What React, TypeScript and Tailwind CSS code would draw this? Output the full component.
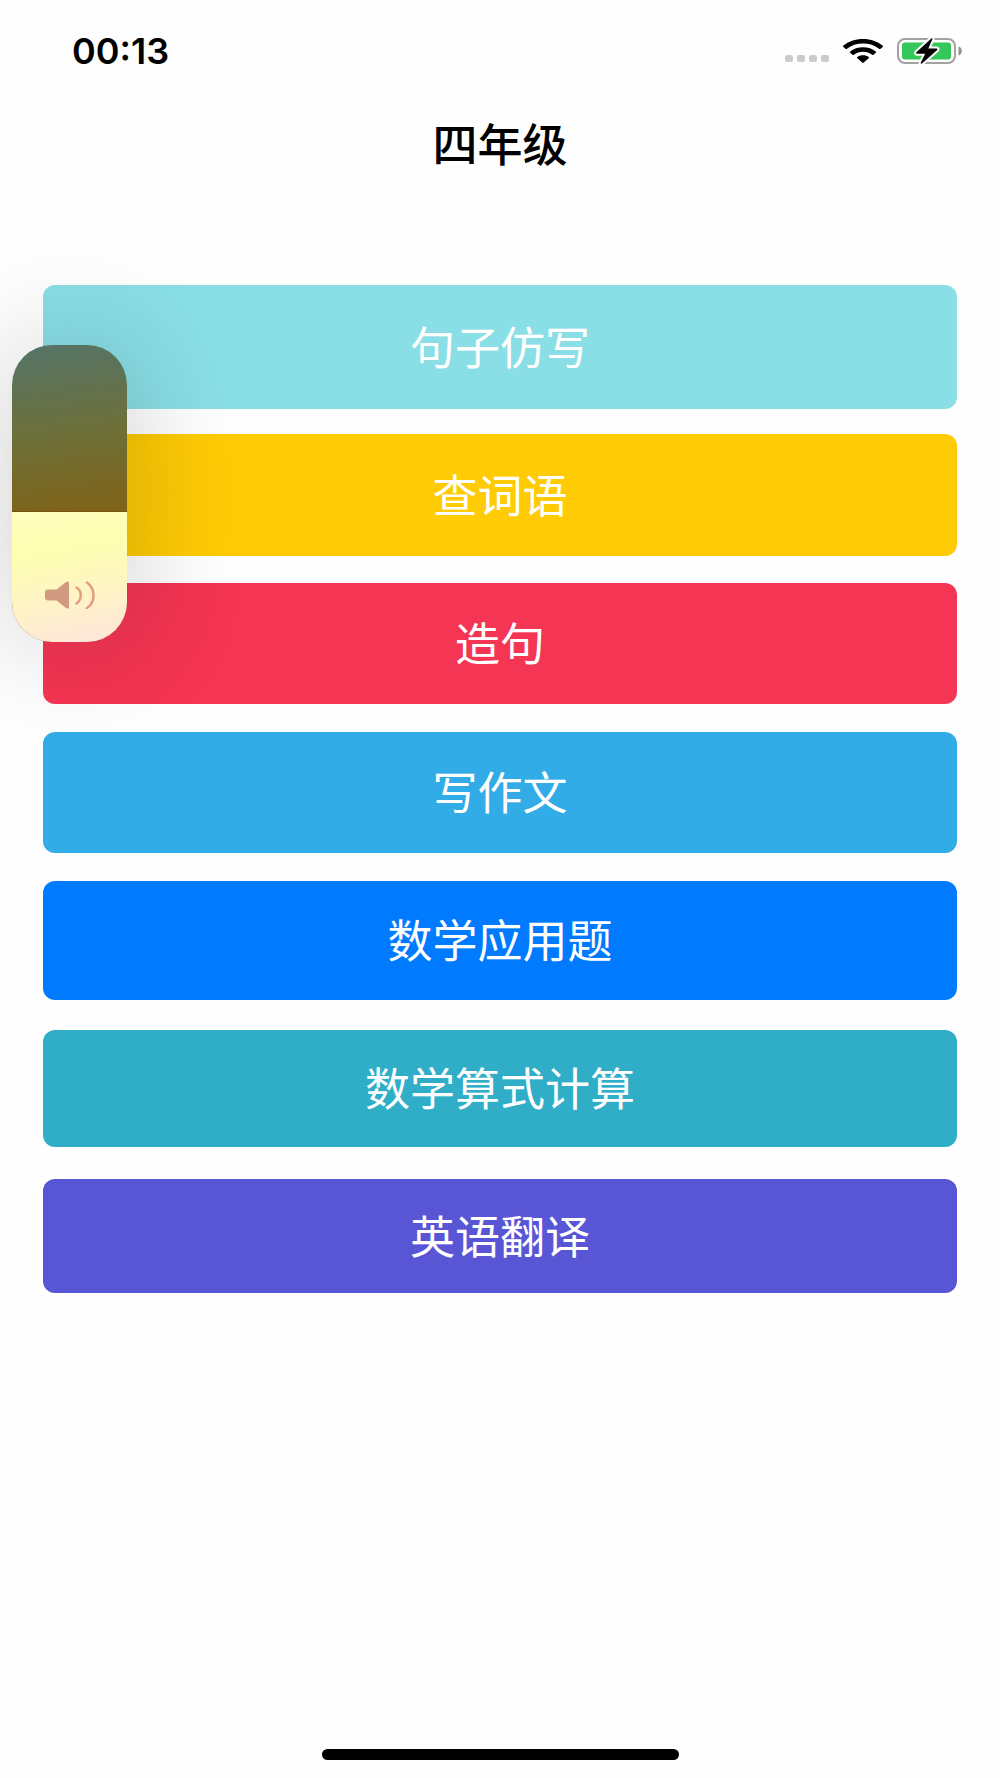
import React, { useState } from 'react';
import clsx from 'clsx';

interface Subject {
  title: string;
  className: string;
}

const subjects: Subject[] = [
  { title: '句子仿写', className: 'h-[124px] bg-[#8adee5]' },
  { title: '查词语', className: 'h-[122px] bg-[#fecb05]' },
  { title: '造句', className: 'h-[121px] bg-[#f43553]' },
  { title: '写作文', className: 'h-[121px] bg-[#32ace6]' },
  { title: '数学应用题', className: 'h-[119px] bg-[#007aff]' },
  { title: '数学算式计算', className: 'h-[117px] bg-[#30aec8]' },
  { title: '英语翻译', className: 'h-[114px] bg-[#5856d4]' },
];

const WifiIcon: React.FC = () => (
  <svg className="w-10 h-6" viewBox="0 0 40 24" preserveAspectRatio="none" fill="#000">
    <path d="M20 0C12.3 0 5.4 2.5.4 6.6c-.5.4-.5 1 0 1.4l2 1.8c.5.4 1.100.4 1.600 0C8.200 6.500 13.800 4.600 20 4.600s11.800 1.900 16 5.200c.5.4 1.100.4 1.600 0l2-1.800c.5-.4.5-1 0-1.400C34.600 2.500 27.700 0 20 0Z" />
    <path d="M20 8.200c-5 0-9.500 1.600-12.800 4.200-.5.4-.5 1 0 1.400l2.200 1.900c.4.4 1 .4 1.500 0 2.400-1.900 5.600-3 9.100-3s6.700 1.100 9.100 3c.5.4 1.100.4 1.500 0l2.200-1.900c.5-.4.5-1 0-1.400C29.500 9.800 25 8.200 20 8.200Z" />
    <path d="M20 16.200c-2.200 0-4.200.6-5.700 1.700-.5.4-.5.900 0 1.300l4.900 4.400c.5.4 1.100.4 1.600 0l4.900-4.400c.5-.4.5-.9 0-1.300-1.500-1.100-3.500-1.700-5.700-1.700Z" />
  </svg>
);

const BatteryIcon: React.FC = () => (
  <svg className="w-[66px] h-[26px]" viewBox="0 0 66 26" fill="none">
    <rect x="1" y="1" width="57" height="24" rx="7" stroke="#a2a2a2" strokeWidth="2" />
    <rect x="5" y="4.500" width="49" height="17" rx="3" fill="#34c759" />
    <path d="M61.500 8.500c2 .5 3.300 2.300 3.300 4.500s-1.300 4-3.300 4.500Z" fill="#929292" />
    <path
      d="M34.300.500 19.300 14.300c-.5.5-.2 1.400.5 1.400h8.400l-4.500 9.100c-.2.8.6 1.200 1.300.6L40.200 11.900c.5-.6.2-1.400-.5-1.400h-8.400l4.200-9.400c.2-.8-.6-1.100-1.200-.6Z"
      fill="#000"
      stroke="#fefefe"
      strokeWidth="4"
      strokeLinejoin="round"
      paintOrder="stroke"
    />
  </svg>
);

const SpeakerIcon: React.FC = () => (
  <svg className="w-[50px] h-7" viewBox="0 0 50 28" fill="none">
    <path
      d="M3 8.500h8.500L21 1c1.400-1.100 3-.6 3 1v24c0 1.600-1.600 2.100-3 1l-9.500-7.500H3c-1.700 0-3-1-3-2.500v-6c0-1.500 1.300-2.500 3-2.500Z"
      fill="#d09a80"
    />
    <path d="M31.500 6.500c5.700 3.600 5.700 11.900 0 16" stroke="#e39c80" strokeWidth="2.500" strokeLinecap="round" />
    <path d="M42 1.500c8.700 6.500 8.700 19.500 0 25.500" stroke="#e39c80" strokeWidth="2.500" strokeLinecap="round" />
  </svg>
);

const StatusBar: React.FC = () => (
  <div className="flex items-center justify-between h-[101px] pl-[72px] pr-[37px]">
    <span className="font-['Inter',sans-serif] text-[36px] leading-10 font-semibold">00:13</span>
    <div className="flex items-center gap-[14px]">
      <div className="flex gap-1 pt-4">
        {[0, 1, 2, 3].map((dot) => (
          <span key={dot} className="w-2 h-[7px] rounded-[2px] bg-[#cbcbcb]" />
        ))}
      </div>
      <WifiIcon />
      <BatteryIcon />
    </div>
  </div>
);

const VolumeOverlay: React.FC = () => {
  const [volume, setVolume] = useState<number>(44);

  return (
    <div className="absolute top-[345px] left-3 w-[115px] h-[297px] rounded-[40px] shadow-[0_0_120px_rgba(0,0,0,0.2)]">
      <div className="relative flex flex-col justify-end h-full rounded-[40px] overflow-hidden bg-[linear-gradient(172deg,#547468_0%,#6e6f37_32%,#7f6319_56%)]">
        <div
          className="border-t border-[#78500f] bg-[linear-gradient(170deg,#ffffc0_0%,#fdffb0_30%,#fff3c6_65%,#fde4dc_100%)] bg-origin-border"
          style={{ height: `${volume}%` }}
        />
        <div className="absolute inset-x-0 bottom-[33px] flex justify-center">
          <SpeakerIcon />
        </div>
        <input
          type="range"
          aria-label="音量"
          min={0}
          max={100}
          value={volume}
          onChange={(e) => setVolume(Number(e.target.value))}
          className="absolute inset-0 w-full h-full opacity-0 [writing-mode:vertical-lr] [direction:rtl]"
        />
      </div>
    </div>
  );
};

const App: React.FC = () => {
  return (
    <div className="relative flex flex-col min-h-screen overflow-hidden bg-[#fefefe] text-black font-['Noto_Sans_CJK_SC',sans-serif]">
      <StatusBar />
      <h1 className="text-center text-[45px] leading-[84px] font-medium">四年级</h1>
      <main className="grid auto-rows-[149px] items-start mt-[100px] px-[43px]">
        {subjects.map((subject) => (
          <button
            key={subject.title}
            type="button"
            className={clsx('w-full pb-1 rounded-xl text-[45px] leading-none font-normal text-white', subject.className)}
          >
            {subject.title}
          </button>
        ))}
      </main>
      <div className="w-[357px] h-[11px] mt-auto mb-[18px] mx-auto rounded-full bg-black" />
      <VolumeOverlay />
    </div>
  );
};

export default App;
